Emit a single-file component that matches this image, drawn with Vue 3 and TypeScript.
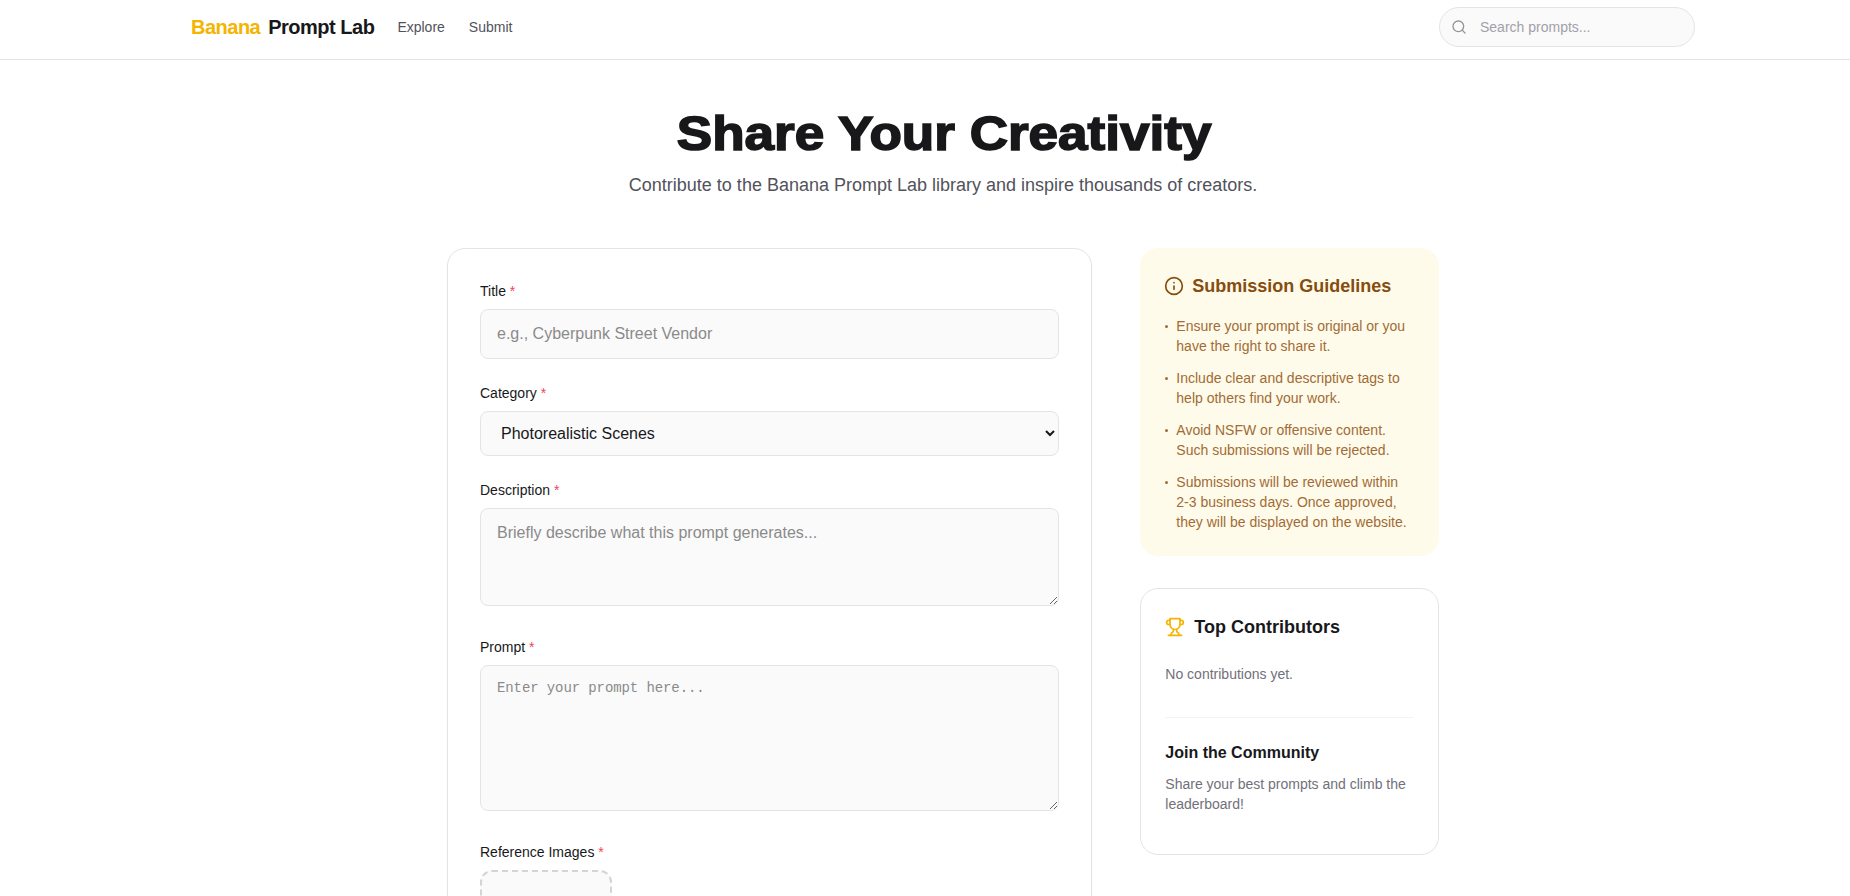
<script setup lang="ts">
const guidelines = [
  'Ensure your prompt is original or you have the right to share it.',
  'Include clear and descriptive tags to help others find your work.',
  'Avoid NSFW or offensive content. Such submissions will be rejected.',
  'Submissions will be reviewed within 2-3 business days. Once approved, they will be displayed on the website.',
]

const categories = ['Photorealistic Scenes', 'Illustration & Art', 'Product Design', 'Portraits']
</script>

<template>
  <div class="page">
    <header class="nav">
      <div class="nav-inner">
        <a class="logo"><span class="logo-accent">Banana</span><span>Prompt Lab</span></a>
        <nav class="nav-links">
          <a>Explore</a>
          <a>Submit</a>
        </nav>
        <label class="search">
          <svg class="search-icon" viewBox="0 0 24 24" width="16" height="16" fill="none" stroke="currentColor" stroke-width="2" stroke-linecap="round" stroke-linejoin="round">
            <circle cx="11" cy="11" r="8" />
            <path d="m21 21-4.3-4.3" />
          </svg>
          <input type="text" placeholder="Search prompts..." />
        </label>
      </div>
    </header>

    <main class="main">
      <section class="hero">
        <h1>Share Your Creativity</h1>
        <p>Contribute to the Banana Prompt Lab library and inspire thousands of creators.</p>
      </section>

      <div class="columns">
        <form class="form-card" @submit.prevent>
          <div class="field">
            <label>Title <span class="req">*</span></label>
            <input class="control text" type="text" placeholder="e.g., Cyberpunk Street Vendor" />
          </div>
          <div class="field">
            <label>Category <span class="req">*</span></label>
            <select class="control select">
              <option v-for="c in categories" :key="c">{{ c }}</option>
            </select>
          </div>
          <div class="field">
            <label>Description <span class="req">*</span></label>
            <textarea class="control area desc" placeholder="Briefly describe what this prompt generates..."></textarea>
          </div>
          <div class="field">
            <label>Prompt <span class="req">*</span></label>
            <textarea class="control area prompt" placeholder="Enter your prompt here..."></textarea>
          </div>
          <div class="field">
            <label>Reference Images <span class="req">*</span></label>
            <div class="upload"></div>
          </div>
        </form>

        <aside class="side">
          <section class="guide">
            <h3>
              <svg viewBox="0 0 24 24" width="20" height="20" fill="none" stroke="currentColor" stroke-width="2" stroke-linecap="round" stroke-linejoin="round">
                <circle cx="12" cy="12" r="10" />
                <path d="M12 16v-4" />
                <path d="M12 8h.01" />
              </svg>
              Submission Guidelines
            </h3>
            <ul>
              <li v-for="g in guidelines" :key="g">{{ g }}</li>
            </ul>
          </section>

          <section class="contrib">
            <h3>
              <svg viewBox="0 0 24 24" width="20" height="20" fill="none" stroke="currentColor" stroke-width="2" stroke-linecap="round" stroke-linejoin="round">
                <path d="M6 9H4.5a2.5 2.5 0 0 1 0-5H6" />
                <path d="M18 9h1.5a2.5 2.5 0 0 0 0-5H18" />
                <path d="M4 22h16" />
                <path d="M10 14.66V17c0 .55-.47.98-.97 1.21C7.85 18.75 7 20.24 7 22" />
                <path d="M14 14.66V17c0 .55.47.98.97 1.21C16.15 18.75 17 20.24 17 22" />
                <path d="M18 2H6v7a6 6 0 0 0 12 0V2Z" />
              </svg>
              <span>Top Contributors</span>
            </h3>
            <p class="muted empty">No contributions yet.</p>
            <div class="join">
              <h4>Join the Community</h4>
              <p class="muted">Share your best prompts and climb the leaderboard!</p>
            </div>
          </section>
        </aside>
      </div>
    </main>
  </div>
</template>

<style scoped>
.page {
  height: 896px;
  overflow: hidden;
  background: #fff;
  color: #18181b;
  font-family: "Liberation Sans", Arial, sans-serif;
}

.nav {
  height: 60px;
  box-sizing: border-box;
  border-bottom: 1px solid #e4e4e7;
}

.nav-inner {
  width: 1504px;
  height: 54px;
  margin-left: 191px;
  display: flex;
  align-items: center;
}

.logo {
  display: flex;
  gap: 8px;
  font-size: 20px;
  font-weight: 700;
  letter-spacing: -0.5px;
  color: #18181b;
  margin-right: 23px;
}

.logo-accent {
  color: #f4b400;
}

.nav-links {
  display: flex;
  gap: 24px;
  font-size: 14px;
  color: #52525b;
}

.search {
  margin-left: auto;
  width: 256px;
  height: 40px;
  box-sizing: border-box;
  display: flex;
  align-items: center;
  gap: 11px;
  padding: 0 11px;
  border: 1px solid #e4e4e7;
  border-radius: 20px;
  background: #fafafa;
}

.search-icon {
  color: #949499;
  flex-shrink: 0;
}

.search input {
  border: none;
  outline: none;
  background: transparent;
  width: 100%;
  font: 14px "Liberation Sans", Arial, sans-serif;
}

.search input::placeholder {
  color: #a1a1aa;
}

.main {
  width: 992px;
  margin-left: 447px;
}

.hero {
  padding-top: 48px;
  text-align: center;
}

/* no Arial Black here: bold widened and thickened to the same weight */
.hero h1 {
  margin: 0;
  padding-left: 2px;
  font-size: 48px;
  line-height: 52px;
  font-weight: 900;
  -webkit-text-stroke: 1.6px #18181b;
  transform: scaleX(1.105);
  color: #18181b;
}

.hero p {
  margin: 11px 0 0;
  font-size: 18px;
  line-height: 28px;
  color: #52525b;
}

.columns {
  display: grid;
  grid-template-columns: repeat(3, minmax(0, 1fr));
  gap: 48px;
  margin-top: 49px;
  align-items: start;
}

.form-card {
  grid-column: span 2;
  padding: 32px;
  border: 1px solid #e4e4e7;
  border-radius: 18px;
  box-shadow: 0 1px 2px rgba(0, 0, 0, 0.05);
}

.field {
  margin-bottom: 24px;
}

.field label {
  display: block;
  margin-bottom: 8px;
  font-size: 14px;
  line-height: 20px;
  color: #18181b;
}

.req {
  color: #f04458;
}

.control {
  display: block;
  width: 100%;
  box-sizing: border-box;
  border: 1px solid #e4e4e7;
  border-radius: 8px;
  background: #fafafa;
  color: #18181b;
  font: 16px "Liberation Sans", Arial, sans-serif;
  outline: none;
}

.text {
  height: 50px;
  padding: 12px 16px;
}

.select {
  height: 45px;
  padding: 8px 16px;
}

.area {
  padding: 12px 16px;
  line-height: 24px;
  margin-bottom: 31px;
}

.desc {
  height: 98px;
}

.prompt {
  height: 146px;
  font-family: "Liberation Mono", monospace;
  font-size: 14px;
  line-height: 20px;
  letter-spacing: -0.1px;
}

.control::placeholder {
  color: #8a8a8a;
}

.upload {
  width: 132px;
  height: 132px;
  box-sizing: border-box;
  border: 2px dashed #d4d4d8;
  border-radius: 12px;
  background: #fafafa;
}

.side {
  display: flex;
  flex-direction: column;
  gap: 32px;
}

.guide {
  padding: 24px;
  border-radius: 18px;
  background: #fffbeb;
}

.guide h3,
.contrib h3 {
  display: flex;
  align-items: center;
  gap: 8px;
  margin: 0;
  font-size: 18px;
  line-height: 28px;
  font-weight: 700;
}

.guide h3 {
  color: #854d0e;
}

.guide ul {
  margin: 16px 0 0;
  padding: 0;
  list-style: none;
}

.guide li {
  position: relative;
  padding: 0 4px 0 12px;
  margin-bottom: 12px;
  font-size: 14px;
  line-height: 20px;
  color: #a16b35;
}

.guide li:last-child {
  margin-bottom: 0;
}

.guide li::before {
  content: "";
  position: absolute;
  left: 1px;
  top: 9px;
  width: 3px;
  height: 3px;
  border-radius: 50%;
  background: currentColor;
}

.contrib {
  padding: 24px;
  border: 1px solid #e4e4e7;
  border-radius: 18px;
}

.contrib h3 {
  gap: 9px;
  color: #18181b;
}

.contrib h3 svg {
  color: #f4b400;
}

.muted {
  margin: 0;
  font-size: 14px;
  line-height: 20px;
  color: #71717a;
}

.empty {
  margin-top: 23px;
}

.join {
  margin-top: 33px;
  padding-top: 23px;
  padding-bottom: 16px;
  border-top: 1px solid #f4f4f5;
}

.join h4 {
  margin: 0 0 9px;
  font-size: 16px;
  line-height: 24px;
  font-weight: 700;
}
</style>

<style>
html,
body {
  overflow: hidden;
}
</style>
